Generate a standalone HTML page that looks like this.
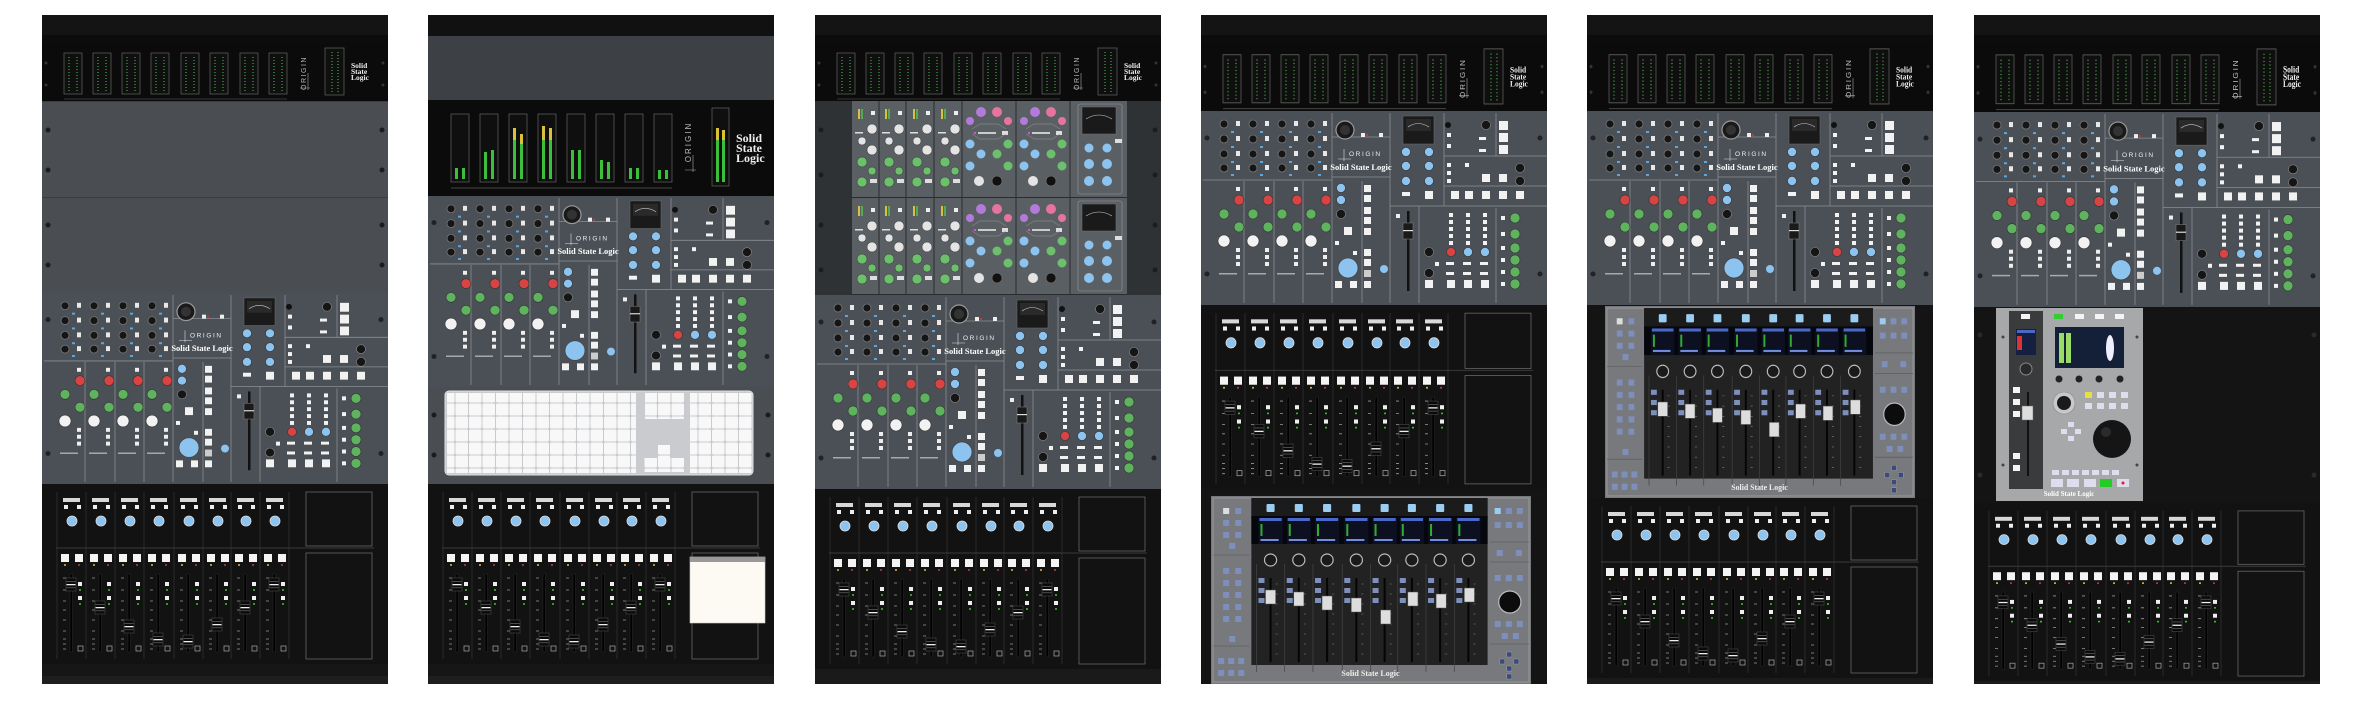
<!DOCTYPE html>
<html><head><meta charset="utf-8"><style>html,body{margin:0;padding:0;background:#fff;overflow:hidden}svg{display:block}</style></head>
<body>
<svg width="2366" height="712" viewBox="0 0 2366 712" xmlns="http://www.w3.org/2000/svg" font-family="Liberation Serif, serif">
<defs>
<symbol id="mb" viewBox="0 0 346 58" preserveAspectRatio="none">
<rect width="346" height="58" fill="#0b0b0b"/>
<g fill="#0f0f0f" stroke="#5a5a5a" stroke-width="0.8">
<rect x="22" y="10" width="18" height="41"/><rect x="51" y="10" width="18" height="41"/><rect x="80" y="10" width="18" height="41"/><rect x="109" y="10" width="18" height="41"/><rect x="139" y="10" width="18" height="41"/><rect x="168" y="10" width="18" height="41"/><rect x="198" y="10" width="18" height="41"/><rect x="227" y="10" width="18" height="41"/>
<rect x="283" y="5" width="19" height="47"/></g>
<g stroke="#2f6a2f" stroke-width="2" stroke-dasharray="1 2">
<path d="M27 14V48M35 14V48M56 14V48M64 14V48M85 14V48M93 14V48M114 14V48M122 14V48M144 14V48M152 14V48M173 14V48M181 14V48M203 14V48M211 14V48M232 14V48M240 14V48M290 9V49M296 9V49"/></g>
<path d="M22 56H245" stroke="#444" stroke-width="0.8"/>
<path d="M266 30V47M258 45H268" stroke="#aaa" stroke-width="0.6"/>
<text x="0" y="0" transform="translate(264,30) rotate(-90)" fill="#bbb" font-family="Liberation Sans, sans-serif" font-size="7" letter-spacing="1.5" text-anchor="middle">ORIGIN</text>
<g fill="#eee" font-size="7.5" font-weight="bold"><text x="309" y="25">Solid</text><text x="309" y="31">State</text><text x="309" y="37">Logic</text></g>
<circle cx="4" cy="20" r="1.5" fill="#333"/><circle cx="4" cy="42" r="1.5" fill="#333"/><circle cx="341" cy="20" r="1.5" fill="#333"/><circle cx="341" cy="42" r="1.5" fill="#333"/>
</symbol>

<symbol id="con" viewBox="0 0 346 194" preserveAspectRatio="none">
<rect width="346" height="194" fill="#4b5056"/>
<g stroke="#8a8e93" stroke-width="0.8" fill="none">
<path d="M2 69H131M43 70V192M73 70V192M102 70V192M131 2V192M161 70V192M131 26H189M131 66H189M189 2V192M189 95H346M218 95V192M243 2V95M295 2V45M243 75H346M243 45H346M295 97V192"/>
</g>
<g id="ck"><circle cx="23" cy="13" r="4" fill="#151515" stroke="#777" stroke-width=".8"/><circle cx="23" cy="28" r="4" fill="#151515" stroke="#777" stroke-width=".8"/><circle cx="23" cy="43" r="4" fill="#151515" stroke="#777" stroke-width=".8"/><circle cx="23" cy="57" r="4" fill="#151515" stroke="#777" stroke-width=".8"/>
<g fill="#e8e8e8"><rect x="35" y="10" width="4" height="5"/><rect x="35" y="25" width="4" height="5"/><rect x="35" y="40" width="4" height="5"/><rect x="35" y="54" width="4" height="5"/></g>
<g fill="#5aa8e0"><rect x="30" y="20" width="3" height="2"/><rect x="30" y="35" width="3" height="2"/><rect x="30" y="50" width="3" height="2"/><rect x="30" y="63" width="3" height="2"/></g>
<circle cx="38" cy="89" r="5" fill="#d84444" stroke="#333" stroke-width=".6"/>
<circle cx="23" cy="103" r="5" fill="#5fb35f" stroke="#333" stroke-width=".6"/>
<circle cx="38" cy="116" r="5" fill="#5fb35f" stroke="#333" stroke-width=".6"/>
<circle cx="23" cy="130" r="6" fill="#f2f2f2" stroke="#333" stroke-width=".6"/>
<g fill="#eee"><rect x="35" y="76" width="4" height="4"/><rect x="35" y="137" width="4" height="4"/><rect x="35" y="144" width="4" height="4"/><rect x="35" y="151" width="4" height="4"/></g>
<rect x="18" y="162" width="18" height="1.5" fill="#aaa"/></g>
<use href="#ck" x="29"/><use href="#ck" x="58"/><use href="#ck" x="87"/>
<circle cx="144" cy="19" r="9" fill="#1a1a1a" stroke="#9a9a9a" stroke-width="1.2"/><circle cx="144" cy="19" r="5" fill="#333"/>
<rect x="160" y="22" width="4" height="4" fill="#eee"/><rect x="178" y="22" width="4" height="4" fill="#eee"/><rect x="165" y="23" width="2" height="2" fill="#c33"/>
<path d="M143 38V50M137 48H150" stroke="#ddd" stroke-width=".6"/>
<text x="148" y="45" fill="#eee" font-family="Liberation Sans, sans-serif" font-size="6.5" letter-spacing="1.6">ORIGIN</text>
<text x="160" y="59" fill="#fff" font-size="8.5" font-weight="bold" text-anchor="middle">Solid State Logic</text>
<circle cx="140" cy="77" r="4.5" fill="#8cc3ef" stroke="#333" stroke-width=".6"/><circle cx="140" cy="89" r="4.5" fill="#8cc3ef" stroke="#333" stroke-width=".6"/><circle cx="140" cy="103" r="4.5" fill="#151515" stroke="#888" stroke-width=".6"/>
<circle cx="147" cy="157" r="10" fill="#8cc3ef" stroke="#444" stroke-width=".8"/>
<g fill="#f2f2f2"><rect x="143" y="116" width="8" height="8"/><rect x="134" y="170" width="7" height="7"/><rect x="149" y="170" width="7" height="7"/><rect x="134" y="130" width="4" height="4"/><rect x="152" y="140" width="4" height="4"/>
<rect x="163" y="74" width="7" height="7"/><rect x="163" y="84" width="7" height="7"/><rect x="163" y="96" width="7" height="7"/><rect x="163" y="106" width="7" height="7"/><rect x="163" y="117" width="7" height="7"/>
<rect x="163" y="138" width="7" height="7"/><rect x="163" y="148" width="7" height="7"/><rect x="163" y="159" width="7" height="7" fill="#ccc"/><rect x="163" y="170" width="7" height="7"/></g>
<circle cx="183" cy="158" r="4" fill="#8cc3ef"/>
<rect x="202" y="5" width="31" height="28" fill="#1a1a1a" stroke="#666" stroke-width=".6"/>
<rect x="205" y="8" width="25" height="12" fill="#2a2a2a"/><path d="M207 16Q217 9 228 16" stroke="#ccc" stroke-width=".6" fill="none"/>
<g fill="#8cc3ef" stroke="#333" stroke-width=".6"><circle cx="205" cy="41" r="4.5"/><circle cx="228" cy="41" r="4.5"/><circle cx="205" cy="55" r="4.5"/><circle cx="228" cy="55" r="4.5"/><circle cx="205" cy="70" r="4.5"/><circle cx="228" cy="70" r="4.5"/></g>
<g fill="#f2f2f2"><rect x="224" y="80" width="8" height="8"/><rect x="201" y="81" width="8" height="4"/>
<rect x="298" y="10" width="9" height="9"/><rect x="298" y="22" width="9" height="9"/><rect x="298" y="34" width="9" height="9"/>
<rect x="246" y="22" width="4" height="4"/><rect x="246" y="33" width="4" height="4"/><rect x="278" y="26" width="7" height="3"/><rect x="278" y="38" width="7" height="3"/>
<rect x="250" y="80" width="8" height="8"/><rect x="264" y="80" width="8" height="8"/><rect x="281" y="80" width="8" height="8"/><rect x="298" y="80" width="8" height="8"/><rect x="315" y="80" width="8" height="8"/>
<rect x="281" y="63" width="8" height="8"/><rect x="298" y="63" width="8" height="8"/><rect x="246" y="52" width="4" height="4"/><rect x="246" y="60" width="4" height="4"/><rect x="246" y="68" width="4" height="4"/><rect x="264" y="52" width="4" height="4"/></g>
<circle cx="247" cy="14" r="3" fill="#111"/><circle cx="285" cy="14" r="4.5" fill="#151515" stroke="#888" stroke-width=".6"/>
<circle cx="319" cy="57" r="4.5" fill="#151515" stroke="#888" stroke-width=".6"/><circle cx="319" cy="70" r="4.5" fill="#151515" stroke="#888" stroke-width=".6"/>
<rect x="206" y="100" width="2.5" height="80" fill="#111"/><rect x="202" y="112" width="10" height="16" fill="#1a1a1a" stroke="#777" stroke-width=".6"/><rect x="202" y="119" width="10" height="1.2" fill="#ddd"/>
<rect x="195" y="103" width="4" height="4" fill="#eee"/>
<g fill="#f2f2f2"><rect x="248" y="102" width="4" height="4"/><rect x="248" y="109" width="4" height="4"/><rect x="248" y="116" width="4" height="4"/><rect x="248" y="123" width="4" height="4"/><rect x="248" y="130" width="4" height="4"/>
<rect x="265" y="102" width="4" height="4"/><rect x="265" y="109" width="4" height="4"/><rect x="265" y="116" width="4" height="4"/><rect x="265" y="123" width="4" height="4"/><rect x="265" y="130" width="4" height="4"/>
<rect x="282" y="102" width="4" height="4"/><rect x="282" y="109" width="4" height="4"/><rect x="282" y="116" width="4" height="4"/><rect x="282" y="123" width="4" height="4"/><rect x="282" y="130" width="4" height="4"/>
<rect x="245" y="151" width="8" height="3"/><rect x="262" y="151" width="8" height="3"/><rect x="279" y="151" width="8" height="3"/><rect x="245" y="161" width="8" height="3"/><rect x="262" y="161" width="8" height="3"/><rect x="279" y="161" width="8" height="3"/>
<rect x="224" y="169" width="8" height="8"/><rect x="246" y="169" width="8" height="8"/><rect x="263" y="169" width="8" height="8"/><rect x="280" y="169" width="8" height="8"/><rect x="234" y="151" width="4" height="4"/>
<rect x="300" y="105" width="4" height="4"/><rect x="300" y="121" width="4" height="4"/><rect x="300" y="135" width="4" height="4"/><rect x="300" y="147" width="4" height="4"/><rect x="300" y="159" width="4" height="4"/><rect x="300" y="171" width="4" height="4"/></g>
<circle cx="228" cy="141" r="4.5" fill="#151515" stroke="#888" stroke-width=".6"/><circle cx="228" cy="162" r="4.5" fill="#151515" stroke="#888" stroke-width=".6"/>
<circle cx="250" cy="141" r="4.5" fill="#d84444" stroke="#333" stroke-width=".6"/><circle cx="267" cy="141" r="4.5" fill="#8cc3ef" stroke="#333" stroke-width=".6"/><circle cx="284" cy="141" r="4.5" fill="#8cc3ef" stroke="#333" stroke-width=".6"/>
<g fill="#5fb35f" stroke="#333" stroke-width=".6"><circle cx="314" cy="107" r="5"/><circle cx="314" cy="123" r="5"/><circle cx="314" cy="137" r="5"/><circle cx="314" cy="149" r="5"/><circle cx="314" cy="161" r="5"/><circle cx="314" cy="173" r="5"/></g>
<g fill="#222"><circle cx="6" cy="27" r="2.5"/><circle cx="6" cy="163" r="2.5"/><circle cx="339" cy="27" r="2.5"/><circle cx="339" cy="163" r="2.5"/></g>
</symbol>

<g id="st">
<rect x="6" y="14" width="17" height="4" fill="#d8d8d8"/>
<rect x="7" y="21" width="4" height="4" fill="#eee"/><rect x="20" y="21" width="4" height="4" fill="#eee"/>
<circle cx="15" cy="37" r="5" fill="#8cc3ef" stroke="#ddd" stroke-width=".8"/>
<rect x="4" y="70" width="8" height="8" fill="#f4f4f4"/><rect x="18" y="70" width="8" height="8" fill="#f4f4f4"/>
<circle cx="8" cy="81" r="1" fill="#e0c040"/><circle cx="22" cy="81" r="1" fill="#c04040"/>
<rect x="13" y="90" width="2.5" height="78" fill="#000" stroke="#2a2a2a" stroke-width=".5"/>
<rect x="21" y="98" width="4" height="4" fill="#eee"/><rect x="21" y="112" width="4" height="4" fill="#eee"/>
<circle cx="23" cy="106" r="1" fill="#3c3"/><circle cx="23" cy="120" r="1" fill="#3c3"/>
<path d="M6 94H9M6 106H9M6 117H9M6 126H9M6 136H9M6 147H9M6 155H9M6 160H9M6 165H9" stroke="#999" stroke-width=".8"/>
<rect x="21" y="162" width="5" height="5" fill="none" stroke="#aaa" stroke-width=".7"/>
<path d="M0 8V175" stroke="#333" stroke-width=".8"/>
</g>
<g id="cap"><rect x="0" y="0" width="10" height="13" fill="#0a0a0a" stroke="#555" stroke-width=".5"/><rect x="0.5" y="6" width="9" height="1.3" fill="#eee"/><rect x="0.5" y="3" width="9" height=".6" fill="#777"/><rect x="0.5" y="9.5" width="9" height=".6" fill="#777"/></g>
<symbol id="fad" viewBox="0 0 346 180" preserveAspectRatio="none">
<rect width="346" height="180" fill="#121212"/>
<use href="#st" x="15"/><use href="#st" x="44"/><use href="#st" x="73"/><use href="#st" x="102"/><use href="#st" x="132"/><use href="#st" x="161"/><use href="#st" x="189"/><use href="#st" x="218"/>
<path d="M247 8V175" stroke="#333" stroke-width=".8"/>
<path d="M14 64H332" stroke="#3a3a3a" stroke-width="1"/>
<use href="#cap" x="24" y="94"/><use href="#cap" x="53" y="117"/><use href="#cap" x="82" y="136"/><use href="#cap" x="111" y="149"/><use href="#cap" x="141" y="151"/><use href="#cap" x="170" y="134"/><use href="#cap" x="198" y="117"/><use href="#cap" x="227" y="94"/>
<g fill="none" stroke="#666" stroke-width=".8"><rect x="264" y="8" width="66" height="54"/><rect x="264" y="69" width="66" height="106"/></g>
</symbol>

<g id="smod">
<g fill="#e4e4e4" stroke="#333" stroke-width=".5"><circle cx="20" cy="28" r="5"/><circle cx="10" cy="40" r="4"/><circle cx="20" cy="49" r="5"/></g>
<g fill="#6cc06c" stroke="#333" stroke-width=".5"><circle cx="10" cy="61" r="5"/><circle cx="20" cy="70" r="4"/><circle cx="10" cy="81" r="5"/></g>
<g fill="#d8c040"><rect x="6" y="8" width="2" height="10"/></g><g fill="#5a5"><rect x="9" y="8" width="2" height="10"/></g>
<rect x="19" y="10" width="4" height="4" fill="#eee"/><rect x="18" y="78" width="7" height="4" fill="#ddd"/><rect x="3" y="31" width="8" height="1.5" fill="#ddd"/>
<path d="M27 0V97" stroke="#2a2d30" stroke-width="1"/></g>
<g id="eq">
<circle cx="19" cy="11" r="5" fill="#b47ada"/><circle cx="35" cy="11" r="5" fill="#e5759e"/><circle cx="8" cy="20" r="4" fill="#b47ada"/><circle cx="46" cy="20" r="4" fill="#e5759e"/>
<circle cx="8" cy="43" r="4.5" fill="#8cc3ef"/><circle cx="46" cy="43" r="4.5" fill="#6cc06c"/><circle cx="19" cy="53" r="4.5" fill="#8cc3ef"/><circle cx="35" cy="53" r="4.5" fill="#6cc06c"/><circle cx="8" cy="65" r="4.5" fill="#8cc3ef"/><circle cx="46" cy="65" r="4.5" fill="#6cc06c"/>
<circle cx="17" cy="80" r="5" fill="#e4e4e4"/><circle cx="35" cy="80" r="5" fill="#111" stroke="#888" stroke-width=".5"/>
<rect x="12" y="31" width="2" height="2" fill="#d5c"/><rect x="16" y="31" width="18" height="2" fill="#ccc"/><rect x="40" y="30" width="6" height="4" fill="#ddd"/>
<path d="M10 28L18 23H36L44 28M10 33L18 38H36L44 33" stroke="#999" stroke-width=".5" fill="none"/>
<path d="M54 0V97" stroke="#2a2d30" stroke-width="1"/></g>
<g id="mrow">
<rect width="275" height="97" fill="#5a5f64"/>
<use href="#smod"/><use href="#smod" x="27"/><use href="#smod" x="55"/><use href="#smod" x="83"/>
<use href="#eq" x="110"/><use href="#eq" x="164"/>
<rect x="226" y="3" width="44" height="90" fill="none" stroke="#999" stroke-width=".6" rx="2"/>
<rect x="230" y="6" width="34" height="27" fill="#1a1a1a" stroke="#777" stroke-width=".5"/><path d="M234 18Q247 10 260 18" stroke="#ccc" stroke-width=".6" fill="none"/>
<g fill="#8cc3ef"><circle cx="237" cy="47" r="4.5"/><circle cx="255" cy="47" r="4.5"/><circle cx="237" cy="63" r="5"/><circle cx="255" cy="63" r="5"/><circle cx="237" cy="80" r="5"/><circle cx="255" cy="80" r="5"/></g>
<rect x="263" y="38" width="7" height="4" fill="#ddd"/>
<path d="M0 96.5H275" stroke="#2a2d30"/></g>
<symbol id="mod" viewBox="0 0 275 194" preserveAspectRatio="none"><use href="#mrow"/><use href="#mrow" y="97"/></symbol>

<g id="ufs">
<rect x="0" y="0" width="8" height="8" rx="1" fill="#9bcdf0"/>
<rect x="-8" y="14" width="24" height="26" fill="#0c1020"/><rect x="-7" y="14" width="22" height="3" fill="#4a68c8"/><rect x="-6" y="20" width="2" height="12" fill="#3a3"/><rect x="-6" y="35" width="18" height="2" fill="#6f8fdc"/>
<circle cx="4" cy="56" r="6" fill="#1a1a1a" stroke="#bbb" stroke-width="1.2"/>
<rect x="3" y="74" width="2" height="84" fill="#050505"/>
<rect x="-8" y="74" width="6" height="5" fill="#7d8fba"/><rect x="-8" y="84" width="6" height="5" fill="#7d8fba"/><rect x="-8" y="94" width="6" height="5" fill="#7d8fba"/>
<path d="M9 80H11M9 90H11M9 100H11M9 110H11M9 120H11M9 130H11M9 140H11M9 150H11" stroke="#888" stroke-width=".6"/>
<path d="M-10 60V168" stroke="#444" stroke-width=".7"/></g>
<symbol id="uf8" viewBox="0 0 317 188" preserveAspectRatio="none">
<rect width="317" height="188" fill="#77797c"/>
<rect x="2" y="2" width="313" height="184" fill="none" stroke="#999" stroke-width="1"/>
<rect x="40" y="2" width="234" height="167" fill="#222"/>
<rect x="40" y="2" width="234" height="20" fill="#1b1b1b"/>
<rect x="40" y="20" width="234" height="28" fill="#05070d"/>
<use href="#ufs" x="55" y="8"/><use href="#ufs" x="83" y="8"/><use href="#ufs" x="111" y="8"/><use href="#ufs" x="140" y="8"/><use href="#ufs" x="168" y="8"/><use href="#ufs" x="195" y="8"/><use href="#ufs" x="223" y="8"/><use href="#ufs" x="251" y="8"/>
<g fill="#ddd" stroke="#555" stroke-width=".5"><rect x="54" y="94" width="10" height="14"/><rect x="82" y="96" width="10" height="14"/><rect x="110" y="100" width="10" height="14"/><rect x="139" y="102" width="10" height="14"/><rect x="168" y="114" width="10" height="14"/><rect x="195" y="96" width="10" height="14"/><rect x="223" y="98" width="10" height="14"/><rect x="251" y="92" width="10" height="14"/></g>
<text x="158" y="180" fill="#eee" font-size="8" font-weight="bold" text-anchor="middle">Solid State Logic</text>
<g fill="#7d8fba"><rect x="12" y="12" width="6" height="6" fill="#ddd"/><rect x="24" y="12" width="6" height="6"/><rect x="12" y="24" width="6" height="6"/><rect x="24" y="24" width="6" height="6"/><rect x="12" y="36" width="6" height="6"/><rect x="24" y="36" width="6" height="6"/><rect x="18" y="47" width="6" height="6"/>
<rect x="12" y="72" width="6" height="6"/><rect x="24" y="72" width="6" height="6"/><rect x="12" y="84" width="6" height="6"/><rect x="24" y="84" width="6" height="6"/><rect x="12" y="96" width="6" height="6"/><rect x="24" y="96" width="6" height="6"/><rect x="12" y="108" width="6" height="6"/><rect x="24" y="108" width="6" height="6"/><rect x="12" y="120" width="6" height="6"/><rect x="24" y="120" width="6" height="6"/><rect x="18" y="140" width="6" height="6"/>
<rect x="7" y="162" width="6" height="6"/><rect x="17" y="162" width="6" height="6"/><rect x="27" y="162" width="6" height="6"/><rect x="7" y="174" width="6" height="6"/><rect x="17" y="174" width="6" height="6"/><rect x="27" y="174" width="6" height="6"/>
<rect x="281" y="12" width="6" height="6" fill="#9bcdf0"/><rect x="292" y="12" width="6" height="6"/><rect x="303" y="12" width="6" height="6"/><rect x="281" y="26" width="6" height="6"/><rect x="292" y="26" width="6" height="6"/><rect x="303" y="26" width="6" height="6"/>
<rect x="283" y="54" width="6" height="6"/><rect x="302" y="54" width="6" height="6"/><rect x="281" y="79" width="6" height="6"/><rect x="292" y="79" width="6" height="6"/><rect x="303" y="79" width="6" height="6"/>
<rect x="281" y="125" width="6" height="6"/><rect x="292" y="125" width="6" height="6"/><rect x="303" y="125" width="6" height="6"/><rect x="288" y="137" width="6" height="6"/><rect x="299" y="137" width="6" height="6"/></g>
<circle cx="296" cy="106" r="11" fill="#0c0c0c" stroke="#bbb" stroke-width="1.2"/>
<g fill="#3a4a7a" stroke="#aaa" stroke-width=".4"><rect x="293" y="156" width="5" height="5"/><rect x="293" y="170" width="5" height="5"/><rect x="286" y="163" width="5" height="5"/><rect x="300" y="163" width="5" height="5"/><rect x="293" y="178" width="5" height="5"/></g>
<path d="M2 59H38M2 150H38M276 46H315M276 66H315M276 148H315" stroke="#555" stroke-width=".6"/>
</symbol>

<symbol id="uc1" viewBox="0 0 147 193" preserveAspectRatio="none">
<rect width="147" height="193" fill="#a7a8aa"/>
<rect x="13" y="3" width="34" height="178" fill="#3a3b3d"/>
<rect x="20" y="21" width="20" height="26" fill="#152040"/><rect x="21" y="28" width="5" height="14" fill="#d33"/><rect x="21" y="22" width="18" height="3" fill="#4a68c8"/>
<circle cx="30" cy="61" r="6" fill="#2a2a2a" stroke="#888" stroke-width="1"/>
<rect x="31" y="84" width="2" height="84" fill="#111"/><rect x="26" y="98" width="11" height="14" fill="#ddd" stroke="#666" stroke-width=".5"/>
<g fill="#f4f4f4"><rect x="17" y="79" width="7" height="6"/><rect x="17" y="91" width="7" height="6"/><rect x="17" y="103" width="7" height="6"/><rect x="17" y="145" width="7" height="6"/><rect x="17" y="157" width="7" height="6"/>
<rect x="25" y="6" width="9" height="5"/><rect x="79" y="6" width="9" height="5"/><rect x="99" y="6" width="9" height="5"/><rect x="119" y="6" width="9" height="5"/></g>
<rect x="58" y="6" width="9" height="5" fill="#3c3"/>
<rect x="59" y="19" width="69" height="41" fill="#142038"/><rect x="63" y="25" width="5" height="30" fill="#9d6"/><rect x="70" y="25" width="5" height="30" fill="#9d6"/><ellipse cx="114" cy="40" rx="4" ry="13" fill="#eef"/>
<g fill="#222"><circle cx="63" cy="71" r="3.5"/><circle cx="83" cy="71" r="3.5"/><circle cx="103" cy="71" r="3.5"/><circle cx="124" cy="71" r="3.5"/></g>
<circle cx="68" cy="95" r="11" fill="#c8c8c8" stroke="#888" stroke-width=".6"/><circle cx="68" cy="95" r="7" fill="#1a1a1a"/>
<circle cx="116" cy="131" r="19" fill="#151515"/><circle cx="110" cy="124" r="5" fill="#2b2b2b"/>
<rect x="89" y="84" width="7" height="6" fill="#e8e040"/>
<g fill="#dde"><rect x="101" y="84" width="7" height="6"/><rect x="113" y="84" width="7" height="6"/><rect x="125" y="84" width="7" height="6"/><rect x="89" y="95" width="7" height="6"/><rect x="101" y="95" width="7" height="6"/><rect x="113" y="95" width="7" height="6"/><rect x="125" y="95" width="7" height="6"/>
<rect x="72" y="114" width="6" height="5"/><rect x="65" y="121" width="6" height="5"/><rect x="79" y="121" width="6" height="5"/><rect x="72" y="128" width="6" height="5"/>
<rect x="56" y="162" width="7" height="5"/><rect x="66" y="162" width="7" height="5"/><rect x="76" y="162" width="7" height="5"/><rect x="86" y="162" width="7" height="5"/><rect x="96" y="162" width="7" height="5"/><rect x="106" y="162" width="7" height="5"/><rect x="116" y="162" width="7" height="5"/>
<rect x="55" y="171" width="12" height="8"/><rect x="71" y="171" width="12" height="8"/><rect x="88" y="171" width="12" height="8"/><rect x="121" y="171" width="12" height="8"/></g>
<rect x="104" y="171" width="12" height="8" fill="#2c2"/><circle cx="127" cy="175" r="1.5" fill="#d22"/>
<text x="73" y="188" fill="#fff" font-size="7" font-weight="bold" text-anchor="middle">Solid State Logic</text>
<g fill="#444"><circle cx="7" cy="29" r="1.5"/><circle cx="7" cy="157" r="1.5"/><circle cx="141" cy="29" r="1.5"/><circle cx="141" cy="157" r="1.5"/></g>
</symbol>

<g id="rtop"><rect width="346" height="28" fill="#141414"/><rect y="20" width="346" height="8" fill="#0c0c0c"/></g>
<g id="rbot"><rect width="346" height="20" fill="#161616"/><rect y="12" width="346" height="8" fill="#1e1e1e"/></g>
<pattern id="kp" x="0" y="0" width="13.5" height="13" patternUnits="userSpaceOnUse"><rect x="0.5" y="0.5" width="12.5" height="12" rx="1.5" fill="#f8f8f8"/></pattern>
</defs>

<rect width="2366" height="712" fill="#fff"/>

<g transform="translate(42,0)">
<use href="#rtop" y="15"/>
<use href="#mb" y="43" width="346" height="58"/>
<rect y="101" width="346" height="97" fill="#4a4e53"/><rect y="197" width="346" height="96" fill="#4a4e53"/>
<path d="M0 101.5H346M0 197.5H346" stroke="#3a3d41"/>
<g fill="#1c1c1c"><circle cx="6" cy="130" r="2.5"/><circle cx="340" cy="130" r="2.5"/><circle cx="6" cy="170" r="2.5"/><circle cx="340" cy="170" r="2.5"/><circle cx="6" cy="225" r="2.5"/><circle cx="340" cy="225" r="2.5"/><circle cx="6" cy="265" r="2.5"/><circle cx="340" cy="265" r="2.5"/></g>
<use href="#con" y="293" width="346" height="191"/>
<use href="#fad" y="484" width="346" height="180"/>
<use href="#rbot" y="664"/>
</g>

<g transform="translate(428,0)">
<rect y="15" width="346" height="21" fill="#111"/>
<rect y="36" width="346" height="64" fill="#3d4044"/>
<rect y="100" width="346" height="96" fill="#0b0b0b"/>
<g fill="#0f0f0f" stroke="#5a5a5a" stroke-width=".8"><rect x="23" y="114" width="18" height="68"/><rect x="52" y="114" width="18" height="68"/><rect x="81" y="114" width="18" height="68"/><rect x="110" y="114" width="18" height="68"/><rect x="139" y="114" width="18" height="68"/><rect x="168" y="114" width="18" height="68"/><rect x="197" y="114" width="18" height="68"/><rect x="226" y="114" width="18" height="68"/><rect x="284" y="108" width="17" height="78"/></g>
<g fill="#3cc03c"><rect x="27" y="168" width="3" height="11"/><rect x="34" y="168" width="3" height="11"/><rect x="56" y="152" width="3" height="27"/><rect x="63" y="150" width="3" height="29"/><rect x="85" y="140" width="3" height="39"/><rect x="92" y="144" width="3" height="35"/><rect x="114" y="140" width="3" height="39"/><rect x="121" y="140" width="3" height="39"/><rect x="143" y="150" width="3" height="29"/><rect x="150" y="150" width="3" height="29"/><rect x="172" y="160" width="3" height="19"/><rect x="179" y="162" width="3" height="17"/><rect x="201" y="168" width="3" height="11"/><rect x="208" y="168" width="3" height="11"/><rect x="230" y="170" width="3" height="9"/><rect x="237" y="170" width="3" height="9"/><rect x="288" y="140" width="3" height="42"/><rect x="294" y="140" width="3" height="42"/></g>
<g fill="#d8c23a"><rect x="85" y="128" width="3" height="12"/><rect x="114" y="126" width="3" height="14"/><rect x="121" y="128" width="3" height="12"/><rect x="92" y="134" width="3" height="10"/><rect x="288" y="128" width="3" height="12"/><rect x="294" y="130" width="3" height="10"/></g>
<path d="M23 188H244" stroke="#444"/>
<path d="M265 155V172M257 170H268" stroke="#aaa" stroke-width=".6"/>
<text transform="translate(263,142) rotate(-90)" fill="#bbb" font-family="Liberation Sans, sans-serif" font-size="8" letter-spacing="2" text-anchor="middle">ORIGIN</text>
<g fill="#eee" font-size="12" font-weight="bold"><text x="308" y="142">Solid</text><text x="308" y="152">State</text><text x="308" y="162">Logic</text></g>
<use href="#con" y="196" width="346" height="191"/>
<rect y="387" width="346" height="97" fill="#4a4e53"/>
<g fill="#1c1c1c"><circle cx="6" cy="415" r="2.5"/><circle cx="340" cy="415" r="2.5"/><circle cx="6" cy="455" r="2.5"/><circle cx="340" cy="455" r="2.5"/></g>
<rect x="17" y="391" width="308" height="84" rx="4" fill="#c9cbce" stroke="#e0e0e0" stroke-width="1"/>
<rect x="19" y="393" width="189" height="80" fill="url(#kp)"/>
<rect x="217" y="393" width="40" height="26" fill="url(#kp)"/>
<rect x="229" y="445" width="13" height="13" fill="url(#kp)"/><rect x="216" y="458" width="40" height="14" fill="url(#kp)"/>
<rect x="262" y="393" width="62" height="80" fill="url(#kp)"/>
<use href="#fad" y="484" width="346" height="180"/>
<rect x="262" y="557" width="75" height="66" fill="#fcfaf2" stroke="#ccc" stroke-width=".6"/><rect x="262" y="557" width="75" height="5" fill="#999"/>
<use href="#rbot" y="664"/>
</g>

<g transform="translate(815,0)">
<use href="#rtop" y="15"/>
<use href="#mb" y="43" width="346" height="58"/>
<rect y="101" width="346" height="194" fill="#2f3235"/>
<use href="#mod" x="37" y="101" width="275" height="194"/>
<g fill="#1c1c1c"><circle cx="6" cy="130" r="2.5"/><circle cx="340" cy="130" r="2.5"/><circle cx="6" cy="175" r="2.5"/><circle cx="340" cy="175" r="2.5"/><circle cx="6" cy="225" r="2.5"/><circle cx="340" cy="225" r="2.5"/><circle cx="6" cy="270" r="2.5"/><circle cx="340" cy="270" r="2.5"/></g>
<use href="#con" y="295" width="346" height="194"/>
<use href="#fad" y="489" width="346" height="180"/>
<rect y="669" width="346" height="15" fill="#1a1a1a"/>
</g>

<g transform="translate(1201,0)">
<use href="#rtop" y="15"/>
<use href="#mb" y="43" width="346" height="68"/>
<use href="#con" y="111" width="346" height="194"/>
<use href="#fad" y="305" width="346" height="184"/>
<rect y="489" width="346" height="195" fill="#141414"/>
<use href="#uf8" x="10" y="496" width="320" height="188"/>
</g>

<g transform="translate(1587,0)">
<use href="#rtop" y="15"/>
<use href="#mb" y="43" width="346" height="68"/>
<use href="#con" y="111" width="346" height="194"/>
<rect y="305" width="346" height="193" fill="#141414"/>
<use href="#uf8" x="18" y="306" width="310" height="192"/>
<use href="#fad" y="498" width="346" height="180"/>
<rect y="678" width="346" height="6" fill="#1a1a1a"/>
</g>

<g transform="translate(1974,0)">
<use href="#rtop" y="15"/>
<use href="#mb" y="43" width="346" height="69"/>
<use href="#con" y="112" width="346" height="195"/>
<rect y="307" width="346" height="196" fill="#141414"/>
<g fill="#2a2a2a"><circle cx="6" cy="335" r="2.5"/><circle cx="340" cy="335" r="2.5"/><circle cx="6" cy="475" r="2.5"/><circle cx="340" cy="475" r="2.5"/></g>
<use href="#uc1" x="22" y="308" width="147" height="193"/>
<use href="#fad" y="503" width="346" height="178"/>
<rect y="681" width="346" height="3" fill="#1a1a1a"/>
</g>
</svg>
</body></html>
